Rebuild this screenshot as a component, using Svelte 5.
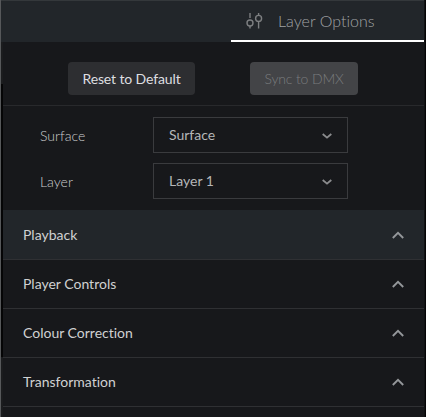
<script>
  const fields = [
    { label: 'Surface', value: 'Surface' },
    { label: 'Layer', value: 'Layer 1' },
  ];
  const sections = [
    { title: 'Playback', active: true },
    { title: 'Player Controls' },
    { title: 'Colour Correction' },
    { title: 'Transformation' },
  ];
</script>

<div class="window">
  <div class="edge"><i class="upper"></i><i class="middle"></i><i class="lower"></i></div>
  <main>
    <header>
      <div class="tab">
        <svg width="18" height="18" viewBox="0 0 18 18" fill="none" stroke="#7d7f81" stroke-width="1.4">
          <path d="M5 1v5M5 14v2.6M13.6 1v2.2M13.6 9.8v6.8" />
          <circle cx="5" cy="11" r="3" />
          <circle cx="13.6" cy="6.4" r="3" />
        </svg>
        <span>Layer Options</span>
      </div>
    </header>
    <div class="actions">
      <button class="reset">Reset to Default</button>
      <button class="sync" disabled>Sync to DMX</button>
    </div>
    <div class="fields">
      {#each fields as field}
        <div class="field">
          <span class="label">{field.label}</span>
          <div class="select">
            <span>{field.value}</span>
            <svg width="10" height="6" viewBox="0 0 10 6" fill="none" stroke="#8b8c8e" stroke-width="1.8">
              <path d="M.7 1L5 4.6L9.3 1" />
            </svg>
          </div>
        </div>
      {/each}
    </div>
    {#each sections as section}
      <section class:active={section.active}>
        <span>{section.title}</span>
        <svg width="12" height="8" viewBox="0 0 12 8" fill="none" stroke="#94979a" stroke-width="1.9">
          <path d="M.8 7L6 1.8L11.2 7" />
        </svg>
      </section>
    {/each}
  </main>
  <div class="right"></div>
</div>

<style>
  :global(body) { background: #17181b; }
  * { box-sizing: border-box; }
  .window {
    display: grid;
    grid-template-columns: 3px 421px 2px;
    width: 426px;
    height: 417px;
    overflow: hidden;
    background: #17181b;
    font: 400 14px/20px Lato, sans-serif;
    font-variant-ligatures: none;
    color: #d0d1d2;
  }
  .edge { display: flex; flex-direction: column; border-left: 1px solid #56585a; }
  .upper { height: 84px; background: linear-gradient(#22262a 42px, #1b1c1e 42px); }
  .middle { height: 273px; background: #050506; }
  .lower { flex: 1; background: #1b1c1e; }
  .right { background: #050506; border-left: 1px solid #111214; }
  main { display: flex; flex-direction: column; }
  header {
    display: flex;
    justify-content: flex-end;
    height: 42px;
    background: #22262a;
    border-top: 1px solid #34383b;
    margin-left: -2px;
  }
  .tab {
    display: flex;
    align-items: center;
    width: 193px;
    padding: 1px 0 0 14px;
    border-bottom: 2px solid #fff;
    color: #a0a2a4;
    font-size: 16px;
    font-weight: 300;
    letter-spacing: .02px;
  }
  .tab span { margin-left: 15px; white-space: nowrap; }
  .actions {
    display: flex;
    justify-content: space-between;
    height: 64px;
    padding: 20px 66px 0 65px;
    border-bottom: 1px solid #28292c;
  }
  button {
    height: 33px;
    padding: 1px 0 0;
    border: 0;
    border-radius: 4px;
    font: inherit;
    font-variant-ligatures: none;
    white-space: nowrap;
  }
  .reset { width: 127px; background: #2d2e31; color: #dedfe0; letter-spacing: -.12px; }
  .sync { width: 108px; background: #434447; color: #7a7c7e; font-weight: 300; letter-spacing: -.15px; }
  .fields { height: 104px; padding: 11px 0 0 37px; }
  .field { display: flex; height: 36px; margin-bottom: 10px; }
  .label { width: 113px; padding-top: 9px; color: #cbccce; font-weight: 300; }
  .select {
    display: flex;
    justify-content: space-between;
    align-items: center;
    width: 195px;
    padding: 0 15px;
    border: 1px solid #3a3b3e;
    color: #b5b6b8;
  }
  .select svg { position: relative; top: 1px; }
  section {
    display: flex;
    justify-content: space-between;
    align-items: center;
    height: 49px;
    padding: 0 20px;
    border-bottom: 1px solid #2f3033;
  }
  .active { height: 50px; padding-top: 1px; background: #22262a; }
</style>
